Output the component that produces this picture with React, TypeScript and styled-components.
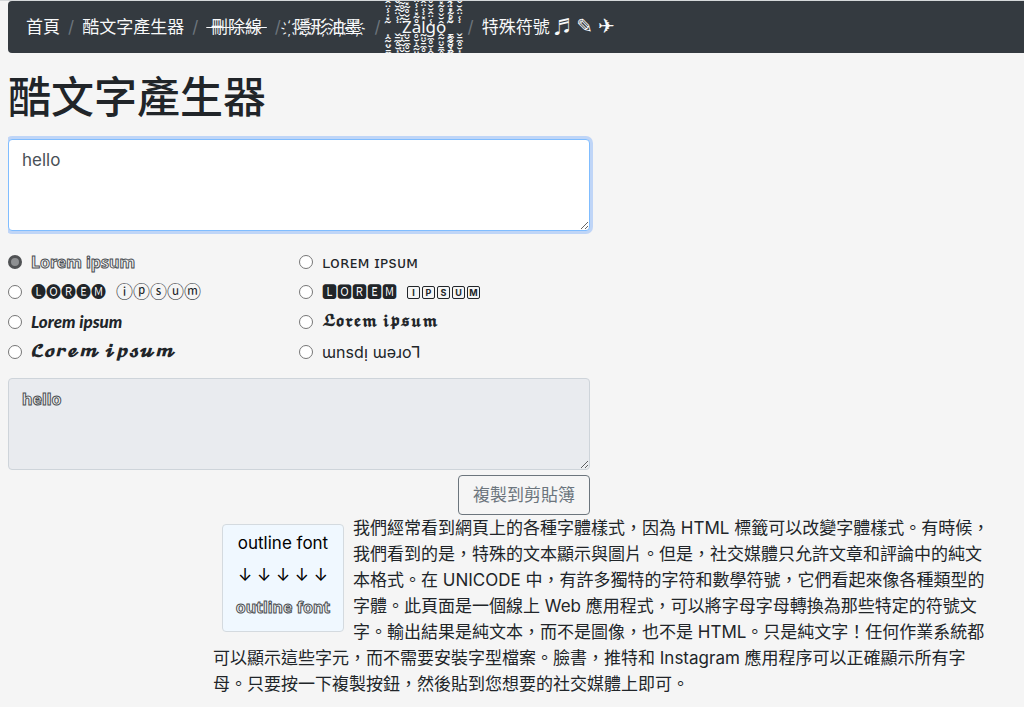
import React, { ReactNode, useState } from "react";
import styled, { createGlobalStyle, css } from "styled-components";

const GlobalStyle = createGlobalStyle`
  *, *::before, *::after { box-sizing: border-box; }
  html { background: #f5f5f5; border-top: 1px solid #d5d8da; }
  body {
    margin: 0 0 0 8px;
    overflow-x: hidden;
    color: #212529;
    font: 400 17px/26px "Inter", "Noto Sans CJK TC", "DejaVu Sans", sans-serif;
  }
`;

const Breadcrumb = styled.ol`
  display: flex;
  margin: 0 0 17px;
  padding: 13px 18px;
  list-style: none;
  overflow: hidden;
  white-space: nowrap;
  background: #343a40;
  border-radius: 4px 0 0 4px;
`;

const Crumb = styled.li`
  display: flex;
  height: 26px;
  & + & { padding-left: 8px; }
  & + &::before {
    content: "/";
    padding-right: 8px;
    color: #6c757d;
  }
`;

const CrumbLink = styled.a<{ $struck?: boolean }>`
  color: #f8f9fa;
  text-decoration: ${(p) => (p.$struck ? "line-through" : "none")};
`;

const Zalgo = styled.span`
  font-family: "Noto Sans", sans-serif;
`;

const Symbol = styled.span`
  font-size: 20px;
  font-weight: 700;
  line-height: 0;
`;

const Title = styled.h1`
  margin: 0 0 15px;
  font-size: 43px;
  font-weight: 500;
  line-height: 54px;
`;

const Form = styled.form`
  display: flex;
  flex-direction: column;
  max-width: 582px;
`;

const outlined = css`
  font-family: "Noto Sans", sans-serif;
  font-size: 16px;
  font-weight: 700;
  -webkit-text-fill-color: #f5f5f5;
  -webkit-text-stroke: 1px #4b4f53;
`;

const TextBox = styled.textarea<{ $active?: boolean; $outlined?: boolean }>`
  display: block;
  width: 100%;
  padding: 7px 13px 5px;
  font: inherit;
  color: #495057;
  border: 1px solid #ced4da;
  border-radius: 4px;
  outline: none;
  background: #e9ebef;
  ${(p) => p.$outlined && outlined}
  ${(p) =>
    p.$active &&
    css`
      background: #fff;
      border-color: #80bdff;
      box-shadow: 0 0 0 3px rgba(0, 98, 255, 0.22);
    `}
`;

const Choices = styled.fieldset`
  display: grid;
  grid-template-columns: 1fr 1fr;
  grid-auto-rows: 30px;
  margin: 16px 0 11px;
  padding: 0;
  border: 0;
`;

const Choice = styled.label`
  display: flex;
  align-items: center;
  gap: 9px;
  white-space: nowrap;
`;

const Radio = styled.input`
  appearance: none;
  flex: none;
  width: 14px;
  height: 14px;
  margin: 0;
  border: 1px solid #767676;
  border-radius: 50%;
  background: #fff;
  &:checked {
    border: 3px solid #505254;
    background: #8e9092;
  }
`;

const Sample = styled.span<{ $size?: number; $math?: boolean }>`
  font-size: ${(p) => p.$size ?? 17}px;
  ${(p) =>
    p.$math &&
    `font-family: "DejaVu Math TeX Gyre", "DejaVu Sans", sans-serif; font-weight: 700;`}
`;

const OutlineSample = styled.span`
  ${outlined}
`;

const ItalicSample = styled.span`
  font: italic 900 17px/26px Lato, sans-serif;
`;

const Pair = styled.span`
  display: flex;
  align-items: center;
  gap: 10px;
`;

const Tiles = styled.span`
  display: flex;
  gap: 2px;
`;

const Tile = styled.span`
  width: 13px;
  height: 13px;
  font-size: 9px;
  font-weight: 700;
  line-height: 11px;
  text-align: center;
  border: 1px solid #212529;
  border-radius: 2px;
`;

const CopyButton = styled.button`
  align-self: flex-end;
  margin-top: 5px;
  padding: 6px 14px;
  font: inherit;
  color: #6c757d;
  background: transparent;
  border: 1px solid #6c757d;
  border-radius: 4px;
`;

const Article = styled.article`
  max-width: 984px;
  padding: 0 0 8px 205px;
`;

const Figure = styled.figure`
  float: left;
  width: 122px;
  margin: 9px 9px 0;
  padding: 2px 0 8px;
  line-height: 32px;
  text-align: center;
  white-space: nowrap;
  color: #000;
  background: #f0f8ff;
  border: 1px solid #d4dadf;
  border-radius: 4px;
`;

const Line = styled.div`
  height: 32px;
`;

const Paragraph = styled.p`
  margin: 0;
`;

const styles: { id: string; sample: ReactNode }[] = [
  { id: "outline", sample: <OutlineSample>Lorem ipsum</OutlineSample> },
  { id: "caps", sample: <Sample $size={16}>ʟᴏʀᴇᴍ ɪᴘsᴜᴍ</Sample> },
  {
    id: "circle",
    sample: (
      <Pair>
        <Sample $size={15}>🅛🅞🅡🅔🅜</Sample>
        <Sample>ⓘⓟⓢⓤⓜ</Sample>
      </Pair>
    ),
  },
  {
    id: "square",
    sample: (
      <Pair>
        <Sample $size={15}>🅻🅾🆁🅴🅼</Sample>
        <Tiles>
          {[..."IPSUM"].map((c) => (
            <Tile key={c}>{c}</Tile>
          ))}
        </Tiles>
      </Pair>
    ),
  },
  { id: "italic", sample: <ItalicSample>Lorem ipsum</ItalicSample> },
  { id: "fraktur", sample: <Sample $math $size={14}>𝕷𝖔𝖗𝖊𝖒 𝖎𝖕𝖘𝖚𝖒</Sample> },
  { id: "script", sample: <Sample $math $size={15}>𝓛𝓸𝓻𝓮𝓶 𝓲𝓹𝓼𝓾𝓶</Sample> },
  { id: "flip", sample: <Sample $size={16}>ɯnsdᴉ ɯǝɹo⅂</Sample> },
];

const up = [..."\u0303\u033d\u0307\u033e\u0308\u0302\u0306\u030c\u030a"];
const down = [..."\u0323\u032d\u0330\u0324\u032c\u0331\u033c\u0325\u032e"];
const rotate = (marks: string[], by: number) =>
  [...marks.slice(by), ...marks.slice(0, by)].join("");
const zalgo = [..."\u00a0\u00a0\u00a0Zalgo\u00a0\u00a0\u00a0"]
  .map((c, i) => c + rotate(up, (i * 2) % 9) + rotate(down, (i * 4) % 9))
  .join("");

const crumbs: { id: string; text: ReactNode; struck?: boolean }[] = [
  { id: "home", text: "首頁" },
  { id: "cool", text: "酷文字產生器" },
  { id: "strike", text: "\u00a0刪除線\u00a0", struck: true },
  { id: "ink", text: "\u00a0҉隱҉形҉油҉墨҉\u00a0" },
  { id: "zalgo", text: <Zalgo>{zalgo}</Zalgo> },
  {
    id: "symbols",
    text: (
      <>
        特殊符號 ♬ <Symbol>✎</Symbol> <Symbol>✈</Symbol>
      </>
    ),
  },
];

export default function App() {
  const [text, setText] = useState("hello");
  const [choice, setChoice] = useState("outline");
  return (
    <>
      <GlobalStyle />
      <nav aria-label="breadcrumb">
        <Breadcrumb>
          {crumbs.map((c) => (
            <Crumb key={c.id}>
              <CrumbLink href="#" $struck={c.struck}>
                {c.text}
              </CrumbLink>
            </Crumb>
          ))}
        </Breadcrumb>
      </nav>
      <Title>酷文字產生器</Title>
      <Form>
        <TextBox
          $active
          aria-label="輸入"
          rows={3}
          value={text}
          onChange={(e) => setText(e.target.value)}
        />
        <Choices>
          {styles.map((s) => (
            <Choice key={s.id}>
              <Radio
                type="radio"
                name="style"
                checked={choice === s.id}
                onChange={() => setChoice(s.id)}
              />
              {s.sample}
            </Choice>
          ))}
        </Choices>
        <TextBox $outlined aria-label="輸出" rows={3} readOnly value={text} />
        <CopyButton type="button">複製到剪貼簿</CopyButton>
      </Form>
      <Article>
        <Figure>
          <Line>outline font</Line>
          <Line>↓ ↓ ↓ ↓ ↓</Line>
          <Line>
            <OutlineSample>outline font</OutlineSample>
          </Line>
        </Figure>
        <Paragraph>
          我們經常看到網頁上的各種字體樣式，因為 HTML
          標籤可以改變字體樣式。有時候，我們看到的是，特殊的文本顯示與圖片。但是，社交媒體只允許文章和評論中的純文本格式。在
          UNICODE
          中，有許多獨特的字符和數學符號，它們看起來像各種類型的字體。此頁面是一個線上
          Web
          應用程式，可以將字母字母轉換為那些特定的符號文字。輸出結果是純文本，而不是圖像，也不是
          HTML。只是純文字！任何作業系統都可以顯示這些字元，而不需要安裝字型檔案。臉書，推特和
          Instagram
          應用程序可以正確顯示所有字母。只要按一下複製按鈕，然後貼到您想要的社交媒體上即可。
        </Paragraph>
      </Article>
    </>
  );
}
